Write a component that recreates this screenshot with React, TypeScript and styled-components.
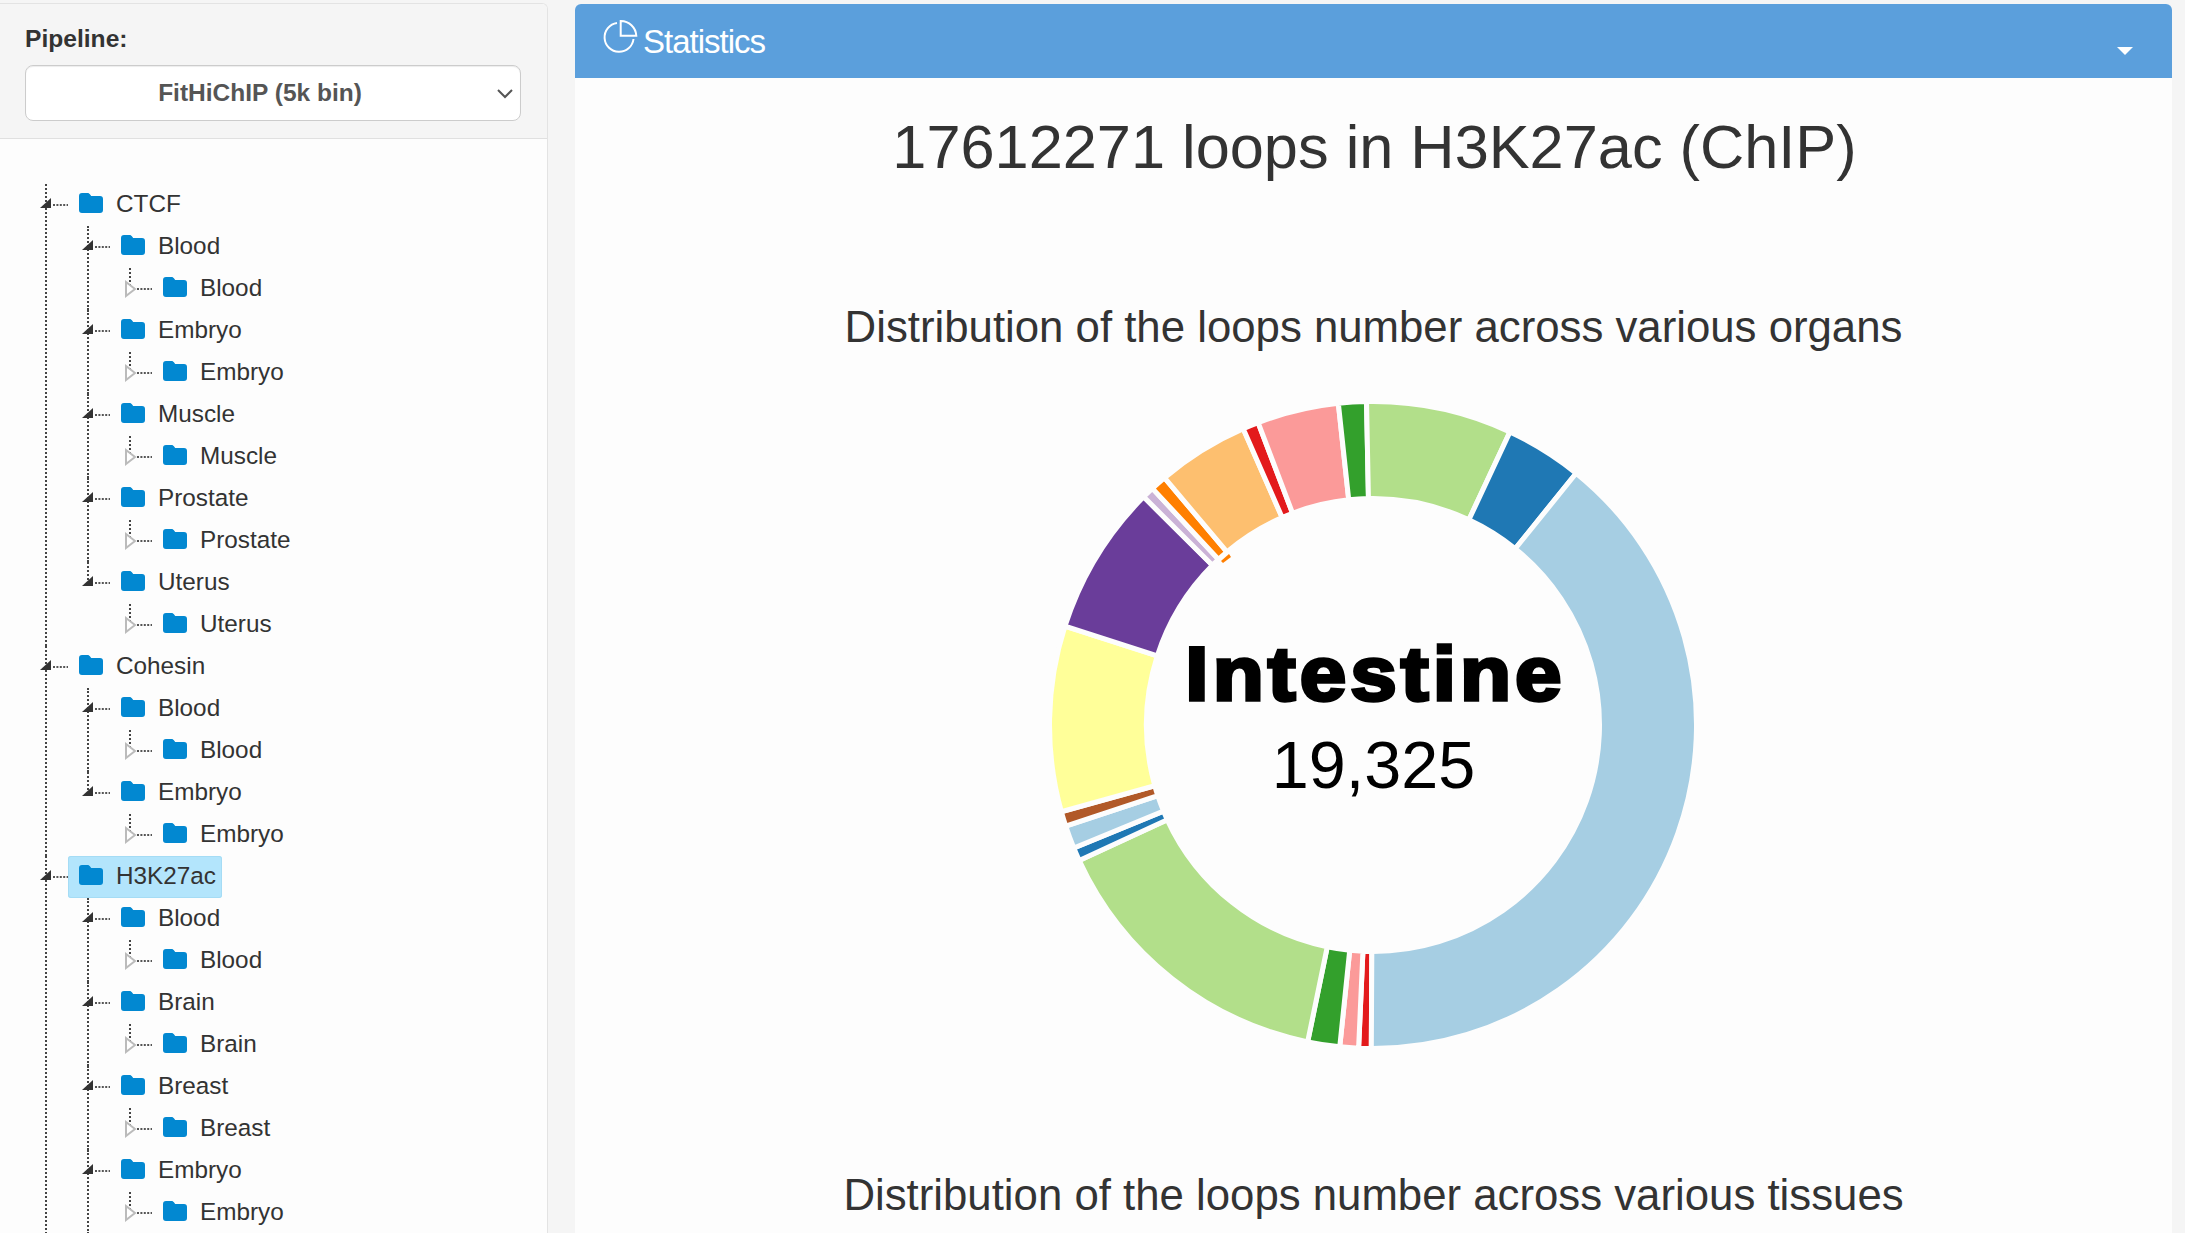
import React from "react";
import styled, { createGlobalStyle } from "styled-components";

const Global = createGlobalStyle`
  html, body { margin: 0; padding: 0; height: 100%; background: #f5f5f5; overflow: hidden; }
  body { font-family: "Liberation Sans", Arial, sans-serif; color: #333; }
  * { box-sizing: border-box; }
`;

const Page = styled.div`
  display: flex;
  gap: 27px;
  height: 100vh;
  padding: 3px 13px 0 0;
  overflow: hidden;
`;

const SidePanel = styled.aside`
  flex: 0 0 548px;
  display: flex;
  flex-direction: column;
  background: #fdfdfd;
  border: 1px solid #e3e3e3;
  border-left: 0;
  border-bottom: 0;
  border-top-right-radius: 6px;
  overflow: hidden;
`;

const SideHeader = styled.div`
  height: 135px;
  flex: none;
  padding: 20px 26px 0 25px;
  background: #f5f5f5;
  border-bottom: 1px solid #e0e0e0;
`;

const FieldLabel = styled.label`
  display: block;
  font-size: 24.6px;
  font-weight: 700;
  line-height: 30px;
  margin: 0 0 11px 0;
`;

const SelectWrap = styled.div`
  position: relative;
  height: 56px;
`;

const Select = styled.select`
  width: 100%;
  height: 100%;
  appearance: none;
  padding: 0 26px 2px 0;
  background: #fff;
  border: 1px solid #ccc;
  border-radius: 8px;
  box-shadow: inset 0 1px 1px rgba(0, 0, 0, 0.075);
  font: 700 24.5px "Liberation Sans", Arial, sans-serif;
  color: #555;
  text-align: center;
  text-align-last: center;
`;

const Chevron = styled.svg`
  position: absolute;
  right: 8px;
  top: 24px;
  width: 16px;
  height: 10px;
  pointer-events: none;
`;

const TreeArea = styled.div`
  flex: 1;
  min-height: 0;
  overflow: hidden;
  padding: 44px 0 0 40px;
`;

const Branch = styled.ul<{ $nested?: boolean }>`
  list-style: none;
  margin: 0 0 0 ${(p) => (p.$nested ? "42px" : "0")};
  padding: 0;
`;

const Node = styled.li<{ $last?: boolean }>`
  position: relative;

  &::before {
    content: "";
    position: absolute;
    left: 5px;
    top: 1px;
    ${(p) => (p.$last ? "height: 22px;" : "bottom: -1px;")}
    border-left: 2px dotted #444;
  }
`;

const Row = styled.div`
  position: relative;
  display: flex;
  height: 42px;
  align-items: center;
`;

const Toggler = styled.svg`
  position: relative;
  flex: none;
  width: 28px;
  height: 42px;
`;

const NodeLabel = styled.span<{ $selected?: boolean }>`
  display: inline-flex;
  align-items: center;
  height: 42px;
  margin-top: ${(p) => (p.$selected ? "1px" : "0")};
  padding: 0 6px ${(p) => (p.$selected ? "2px" : "0")} 11px;
  gap: 13px;
  font-size: 24.3px;
  line-height: 40px;
  color: #333;
  white-space: nowrap;
  background: ${(p) => (p.$selected ? "#b3e5fc" : "transparent")};
  border-radius: 3px;
  box-shadow: ${(p) => (p.$selected ? "inset 0 0 0 1px #a5dcf5" : "none")};
`;

const FolderIcon = styled.svg`
  flex: none;
  width: 24px;
  height: 20px;
  margin-top: -2px;
`;

const MainPanel = styled.main`
  flex: 1;
  min-width: 0;
  background: #fdfdfd;
  border-radius: 6px 6px 0 0;
  margin-top: 1px;
  overflow: hidden;
`;

const PanelBar = styled.header`
  display: flex;
  align-items: center;
  height: 74px;
  padding: 0 39px 0 28px;
  background: #5b9fdc;
  color: #fff;
`;

const BarIcon = styled.svg`
  flex: none;
  width: 35px;
  height: 35px;
  margin: -7px 5px 0 0;
`;

const BarTitle = styled.span`
  font-size: 33px;
  letter-spacing: -1px;
  line-height: 40px;
  margin-top: 1px;
`;

const Caret = styled.span`
  margin: 20px 0 0 auto;
  border-style: solid;
  border-width: 8px 8px 0;
  border-color: #fff transparent transparent;
`;

const PageTitle = styled.h1`
  margin: 36px 0 0;
  font-size: 61.3px;
  font-weight: 400;
  line-height: 66px;
  text-align: center;
  color: #333;
  padding-left: 2px;
`;

const SectionTitle = styled.h2<{ $gap: number }>`
  margin: ${(p) => p.$gap}px 0 0;
  font-size: 43.75px;
  font-weight: 400;
  line-height: 50px;
  text-align: center;
  color: #333;
`;

const ChartWrap = styled.div`
  display: flex;
  justify-content: center;
  margin-top: 23px;
`;

const Chart = styled.svg`
  width: 700px;
  height: 700px;
  display: block;
`;

const ChartName = styled.text`
  font: 700 76px "Liberation Sans", Arial, sans-serif;
  letter-spacing: 3.7px;
  stroke: #000;
  stroke-width: 3.4px;
  text-anchor: middle;
`;

const ChartValue = styled.text`
  font: 400 66.5px "Liberation Sans", Arial, sans-serif;
  text-anchor: middle;
`;

type TreeNode = { name: string; selected?: boolean; open?: boolean; children?: TreeNode[] };

const leaf = (name: string): TreeNode => ({ name, children: [{ name }] });

const tree: TreeNode[] = [
  { name: "CTCF", children: ["Blood", "Embryo", "Muscle", "Prostate", "Uterus"].map(leaf) },
  { name: "Cohesin", children: ["Blood", "Embryo"].map(leaf) },
  {
    name: "H3K27ac",
    selected: true,
    open: true,
    children: ["Blood", "Brain", "Breast", "Embryo"].map(leaf),
  },
];

const Folder = () => (
  <FolderIcon viewBox="0 0 24 20">
    <path
      fill="#0288d1"
      d="M3 0h5.5c1 0 1.6.4 2.2 1.1L12.2 3H21a3 3 0 0 1 3 3v11a3 3 0 0 1-3 3H3a3 3 0 0 1-3-3V3a3 3 0 0 1 3-3z"
    />
  </FolderIcon>
);

const Connector = ({ expanded }: { expanded: boolean }) => (
  <Toggler viewBox="0 0 28 42">
    <line x1="13" y1="22" x2="28" y2="22" stroke="#555" strokeWidth="2" strokeDasharray="2 1.4" />
    {expanded ? (
      <polygon points="0,25 11,15 11,25" fill="#333" />
    ) : (
      <polygon points="2,15 11,22 2,29" fill="#fff" stroke="#bbb" strokeWidth="2" />
    )}
  </Toggler>
);

const TreeBranch = ({ nodes, nested, open }: { nodes: TreeNode[]; nested?: boolean; open?: boolean }) => (
  <Branch $nested={nested}>
    {nodes.map((n, i) => (
      <Node key={n.name + i} $last={i === nodes.length - 1 && !open}>
        <Row>
          <Connector expanded={!!n.children} />
          <NodeLabel $selected={n.selected}>
            <Folder />
            {n.name}
          </NodeLabel>
        </Row>
        {n.children && <TreeBranch nodes={n.children} nested open={n.open} />}
      </Node>
    ))}
  </Branch>
);

const CX = 349;
const CY = 350;
const RO = 323.5;
const RI = 226.5;

const slices: [number, number, string][] = [
  [-179.7, -177.45, "#e31a1c"],
  [-177.45, -174.1, "#fb9a99"],
  [-174.1, -168.35, "#33a02c"],
  [-168.35, -114.75, "#b2df8a"],
  [-114.75, -112.35, "#1f78b4"],
  [-112.35, -108.2, "#a6cee3"],
  [-108.2, -105.55, "#b15928"],
  [-105.55, -72.2, "#ffff99"],
  [-72.2, -45.15, "#6a3d9a"],
  [-45.15, -43.0, "#cab2d6"],
  [-43.0, -40.15, "#ff7f00"],
  [-40.15, -23.65, "#fdbf6f"],
  [-23.65, -20.8, "#e31a1c"],
  [-20.8, -6.15, "#fb9a99"],
  [-6.15, -1.15, "#33a02c"],
  [-1.15, 25.05, "#b2df8a"],
  [25.05, 38.9, "#1f78b4"],
  [38.9, 180.3, "#a6cee3"],
];

const pt = (r: number, deg: number) => {
  const a = (deg * Math.PI) / 180;
  return `${(CX + r * Math.sin(a)).toFixed(2)} ${(CY - r * Math.cos(a)).toFixed(2)}`;
};

const arc = (a: number, b: number) => {
  const large = b - a > 180 ? 1 : 0;
  return `M${pt(RO, a)}A${RO} ${RO} 0 ${large} 1 ${pt(RO, b)}L${pt(RI, b)}A${RI} ${RI} 0 ${large} 0 ${pt(RI, a)}Z`;
};

const Donut = () => (
  <Chart viewBox="0 0 700 700">
    {slices.map(([a, b, c]) => (
      <path key={a} d={arc(a, b)} fill={c} stroke="#fdfdfd" strokeWidth="5" />
    ))}
    <polygon points="-153,-164 -145,-171 -143,-168 -151,-162" transform="translate(350 350)" fill="#ff7f00" />
    <ChartName x="1.8" y="0" transform="translate(349.5 325) scale(1.1 1)">
      Intestine
    </ChartName>
    <ChartValue x="349.5" y="413">19,325</ChartValue>
  </Chart>
);

export default function App() {
  return (
    <>
      <Global />
      <Page>
        <SidePanel>
          <SideHeader>
            <FieldLabel htmlFor="pipeline">Pipeline:</FieldLabel>
            <SelectWrap>
              <Select id="pipeline" defaultValue="5k">
                <option value="5k">FitHiChIP (5k bin)</option>
              </Select>
              <Chevron viewBox="0 0 16 10">
                <path d="M1 1l7 7 7-7" fill="none" stroke="#555" strokeWidth="2" />
              </Chevron>
            </SelectWrap>
          </SideHeader>
          <TreeArea>
            <TreeBranch nodes={tree} open />
          </TreeArea>
        </SidePanel>
        <MainPanel>
          <PanelBar>
            <BarIcon viewBox="0 0 35 35">
              <path d="M14 3A14.5 14.5 0 1 0 30.5 19" fill="none" stroke="#fff" strokeWidth="2" />
              <path d="M17.7 1A15.5 15.5 0 0 1 33.3 15.7H17.7Z" fill="none" stroke="#fff" strokeWidth="2" />
            </BarIcon>
            <BarTitle>Statistics</BarTitle>
            <Caret />
          </PanelBar>
          <PageTitle>17612271 loops in H3K27ac (ChIP)</PageTitle>
          <SectionTitle $gap={122}>Distribution of the loops number across various organs</SectionTitle>
          <ChartWrap>
            <Donut />
          </ChartWrap>
          <SectionTitle $gap={95}>Distribution of the loops number across various tissues</SectionTitle>
        </MainPanel>
      </Page>
    </>
  );
}
